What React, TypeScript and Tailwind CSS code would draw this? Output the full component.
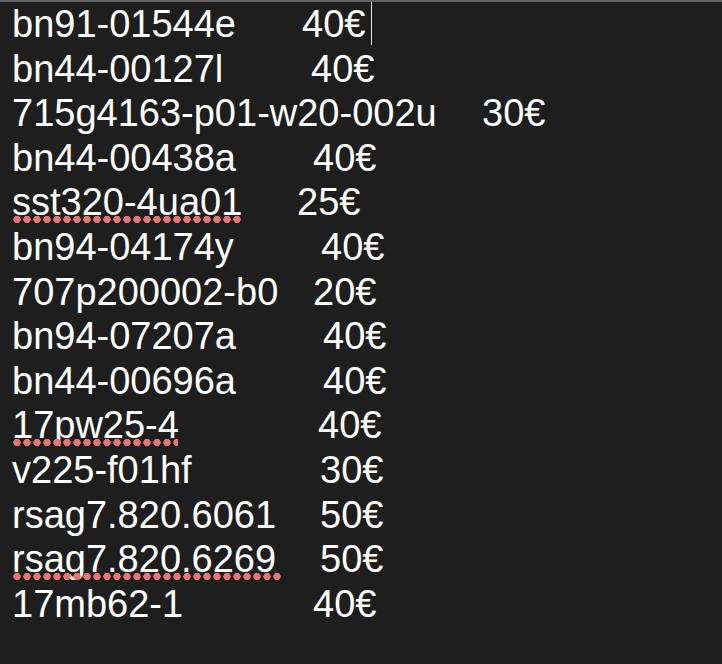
import React from 'react';

type Row = { code: string; price: string; w: string; typo?: string };

const rows: Row[] = [
  { code: 'bn91-01544e', price: '40€', w: 'w-[290px]' },
  { code: 'bn44-00127l', price: '40€', w: 'w-[299px]' },
  { code: '715g4163-p01-w20-002u', price: '30€', w: 'w-[470px]' },
  { code: 'bn44-00438a', price: '40€', w: 'w-[301px]' },
  { code: 'sst320-4ua01', price: '25€', w: 'w-[285px]', typo: 'w-[231px]' },
  { code: 'bn94-04174y', price: '40€', w: 'w-[309px]' },
  { code: '707p200002-b0', price: '20€', w: 'w-[301px]' },
  { code: 'bn94-07207a', price: '40€', w: 'w-[311px]' },
  { code: 'bn44-00696a', price: '40€', w: 'w-[311px]' },
  { code: '17pw25-4', price: '40€', w: 'w-[306px]', typo: 'w-[166px]' },
  { code: 'v225-f01hf', price: '30€', w: 'w-[308px]' },
  { code: 'rsag7.820.6061', price: '50€', w: 'w-[308px]' },
  { code: 'rsag7.820.6269', price: '50€', w: 'w-[308px]', typo: 'w-[270px]' },
  { code: '17mb62-1', price: '40€', w: 'w-[301px]' },
];

export default function App() {
  return (
    <div className="h-[664px] w-full overflow-hidden bg-[#1e1e1e] border-t-2 border-[#616161] pl-3 font-['Liberation_Sans',Arial,sans-serif] text-[38px] leading-[44.6px] text-white">
      {rows.map((r, i) => (
        <div key={i} className="flex items-start whitespace-pre">
          <span className={`relative shrink-0 ${r.w}`}>
            {r.code}
            {/* spellcheck squiggle */}
            {r.typo && (
              <span
                className={`absolute left-0 top-[35px] h-[9px] ${r.typo} bg-[radial-gradient(circle_at_center,#e27676_3.4px,transparent_4px)] bg-[length:10px_9px] bg-repeat-x`}
              />
            )}
          </span>
          <span>{r.price}</span>
          {i === 0 && <span className="ml-[6px] inline-block h-[43px] w-px bg-[#e8e8e8]" />}
        </div>
      ))}
    </div>
  );
}
